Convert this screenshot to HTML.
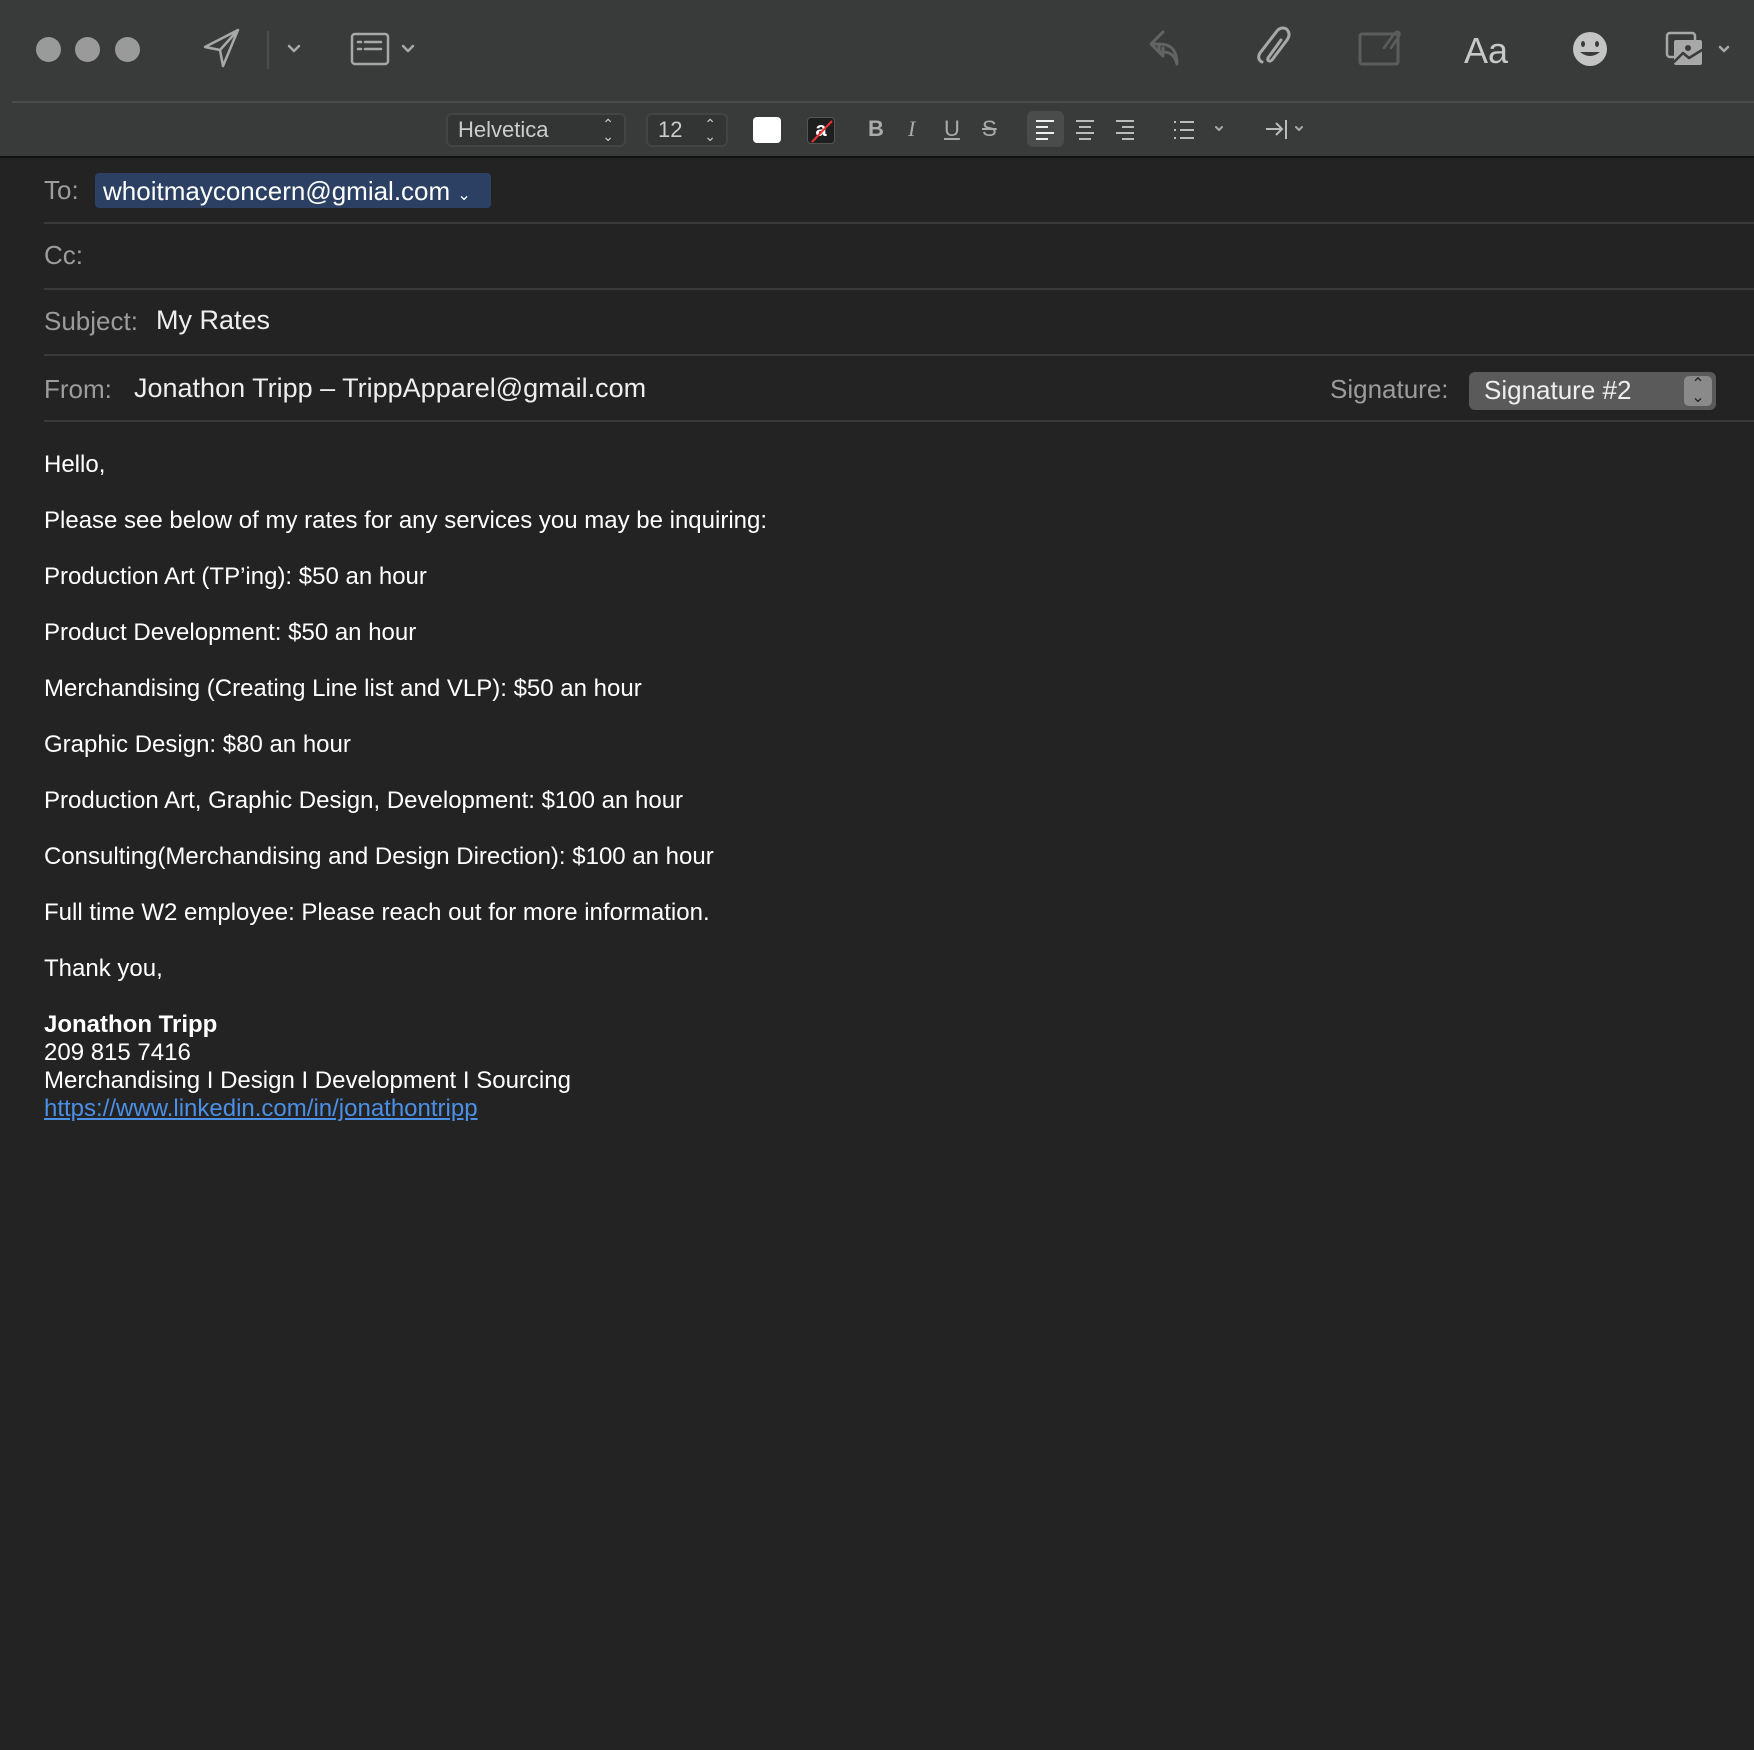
<!DOCTYPE html>
<html><head><meta charset="utf-8"><style>
*{margin:0;padding:0;box-sizing:border-box}
body{width:1754px;height:1750px;background:#232323;font-family:"Liberation Sans",sans-serif;position:relative;overflow:hidden;color:#fff}
.tb{position:absolute;left:0;top:0;width:1754px;height:158px;background:#393a3a;border-bottom:2px solid #111}
.sep1{position:absolute;left:12px;right:0;top:101px;height:2px;background:#4a4b4b}
.dot{position:absolute;top:37px;width:25px;height:25px;border-radius:50%;background:#9a9a9a}
.a{position:absolute}
.lbl{position:absolute;color:#9c9c9c;font-size:26px}
.val{position:absolute;color:#eee;font-size:27px}
.hl{position:absolute;left:44px;right:0;height:2px;background:#3a3a3a}
.body{position:absolute;left:44px;font-size:24px;color:#fff}
.box{position:absolute;border:2px solid #444;border-radius:6px;background:#333434;color:#ccc;font-size:22px}
</style></head><body>
<div class="tb"></div>
<div class="sep1"></div>
<div class="dot" style="left:36px"></div><div class="dot" style="left:75px"></div><div class="dot" style="left:115px"></div>
<svg class="a" style="left:0;top:0" width="1754" height="158" fill="none" stroke="#a8a8a8" stroke-width="2.5" stroke-linecap="round" stroke-linejoin="round">
<path d="M205 47 L238 30 L223 66 L220 50 Z M220 50 L238 30"/>
<line x1="268" y1="32" x2="268" y2="68" stroke="#4c4c4c"/>
<path d="M289 46 l5 5 l5 -5"/>
<rect x="352" y="34" width="36" height="30" rx="3"/><path d="M358 42h3M365 42h16M358 49h3M365 49h16"/>
<path d="M403 46 l5 5 l5 -5"/>
<path d="M1163 32 l-12 12 l8 0 l0 8 l4 0 c8 0 12 4 14 12 c0 -14 -6 -20 -18 -20 M1151 44 l12 12 l0 -8" stroke="#636363" stroke-width="3"/>
<path d="M1262 62 c-4 -2 -4 -6 -2 -9 l17 -22 c3 -4 9 -4 11 0 c2 3 1 6 -1 9 l-15 20 c-2 2 -5 1 -4 -2 l13 -18" stroke-width="3"/>
<rect x="1360" y="34" width="38" height="30" rx="2" stroke="#5c5c5c" stroke-width="3"/><path d="M1384 48 l10-14 c3-4 7-2 5 2 l-8 12" stroke="#5c5c5c"/>
<circle cx="1590" cy="49" r="17" fill="#c4c4c4" stroke="none"/><ellipse cx="1583" cy="44" rx="2" ry="3" fill="#393a3a" stroke="none"/><ellipse cx="1597" cy="44" rx="2" ry="3" fill="#393a3a" stroke="none"/><path d="M1580 52 q10 8 20 0 z" fill="#393a3a" stroke="none"/>
<rect x="1667" y="33" width="28" height="24" rx="3"/><rect x="1674" y="40" width="28" height="25" rx="2" fill="#a8a8a8" stroke="none"/><path d="M1674 62 l9-9 l6 5 l13-8" stroke="#393a3a"/><circle cx="1688" cy="48" r="3" fill="#393a3a" stroke="none"/>
<path d="M1720 47 l4 4 l4 -4"/>
<path d="M1216 127 l3 3 l3 -3 M1296 127 l3 3 l3 -3" stroke-width="2"/>
</svg>
<div class="a" style="left:1464px;top:30px;font-size:36px;color:#c8c8c8">Aa</div>
<div class="box" style="left:446px;top:113px;width:180px;height:34px;padding:2px 10px">Helvetica<span style="position:absolute;right:10px;top:3px;font-size:14px;line-height:12px">⌃<br>⌄</span></div>
<div class="box" style="left:646px;top:113px;width:82px;height:34px;padding:2px 10px">12<span style="position:absolute;right:10px;top:3px;font-size:14px;line-height:12px">⌃<br>⌄</span></div>
<div class="a" style="left:753px;top:117px;width:28px;height:26px;background:#fff;border-radius:4px"></div>
<div class="a" style="left:807px;top:117px;width:28px;height:27px;background:#1e1e1e;border:1px solid #555;border-radius:4px;color:#fff;font-size:20px;font-weight:bold;text-align:center;line-height:24px">a<svg style="position:absolute;left:0;top:0" width="28" height="27"><line x1="4" y1="24" x2="24" y2="3" stroke="#e33" stroke-width="2"/></svg></div>
<div class="a" style="left:868px;top:116px;font-size:22px;font-weight:bold;color:#aaa">B</div>
<div class="a" style="left:908px;top:116px;font-size:22px;font-style:italic;color:#aaa;font-family:'Liberation Serif',serif">I</div>
<div class="a" style="left:944px;top:116px;font-size:22px;text-decoration:underline;color:#aaa">U</div>
<div class="a" style="left:982px;top:116px;font-size:22px;text-decoration:line-through;color:#aaa">S</div>
<div class="a" style="left:1027px;top:111px;width:37px;height:36px;background:#4a4b4b;border-radius:6px"></div>
<svg class="a" style="left:1020px;top:110px" width="250" height="40" stroke="#bbb" stroke-width="2">
<path d="M16 11h18M16 17h12M16 23h18M16 29h12" stroke="#eee"/>
<path d="M56 11h18M59 17h12M56 23h18M59 29h12"/>
<path d="M96 11h18M102 17h12M96 23h18M102 29h12"/>
<path d="M160 12h14M160 20h14M160 28h14"/><path d="M154 12h2M154 20h2M154 28h2"/>
</svg>
<svg class="a" style="left:1262px;top:110px" width="30" height="40" stroke="#bbb" stroke-width="2" fill="none"><path d="M4 19h16M14 13l6 6l-6 6M24 10v19"/></svg>
<div class="lbl" style="left:44px;top:175px">To:</div>
<div class="a" style="left:95px;top:173px;width:396px;height:35px;background:#2b4063;border-radius:4px;color:#fff;font-size:26px;padding:3px 8px;white-space:nowrap">whoitmayconcern@gmial.com <span style="font-size:16px">⌄</span></div>
<div class="hl" style="top:222px"></div>
<div class="lbl" style="left:44px;top:240px">Cc:</div>
<div class="hl" style="top:288px"></div>
<div class="lbl" style="left:44px;top:306px">Subject:</div>
<div class="val" style="left:156px;top:305px">My Rates</div>
<div class="hl" style="top:354px"></div>
<div class="lbl" style="left:44px;top:374px">From:</div>
<div class="val" style="left:134px;top:373px">Jonathon Tripp – TrippApparel@gmail.com</div>
<div class="lbl" style="left:1330px;top:374px">Signature:</div>
<div class="a" style="left:1469px;top:372px;width:247px;height:38px;background:#5a5a5a;border-radius:6px;color:#eee;font-size:26px;padding:3px 15px">Signature #2<div style="position:absolute;right:4px;top:4px;width:28px;height:30px;background:#8a8a8a;border-radius:5px;color:#222;font-size:16px;line-height:13px;text-align:center;padding-top:2px">⌃<br>⌄</div></div>
<div class="hl" style="top:420px"></div>
<div class="body" style="top:451px">Hello,</div>
<div class="body" style="top:507px">Please see below of my rates for any services you may be inquiring:</div>
<div class="body" style="top:563px">Production Art (TP’ing): $50 an hour</div>
<div class="body" style="top:619px">Product Development: $50 an hour</div>
<div class="body" style="top:675px">Merchandising (Creating Line list and VLP): $50 an hour</div>
<div class="body" style="top:731px">Graphic Design: $80 an hour</div>
<div class="body" style="top:787px">Production Art, Graphic Design, Development: $100 an hour</div>
<div class="body" style="top:843px">Consulting(Merchandising and Design Direction): $100 an hour</div>
<div class="body" style="top:899px">Full time W2 employee: Please reach out for more information.</div>
<div class="body" style="top:955px">Thank you,</div>
<div class="body" style="top:1011px;line-height:28px"><b>Jonathon Tripp</b><br>209 815 7416<br>Merchandising I Design I Development I Sourcing<br><span style="color:#4b8fe6;text-decoration:underline">https://www.linkedin.com/in/jonathontripp</span></div>
</body></html>
